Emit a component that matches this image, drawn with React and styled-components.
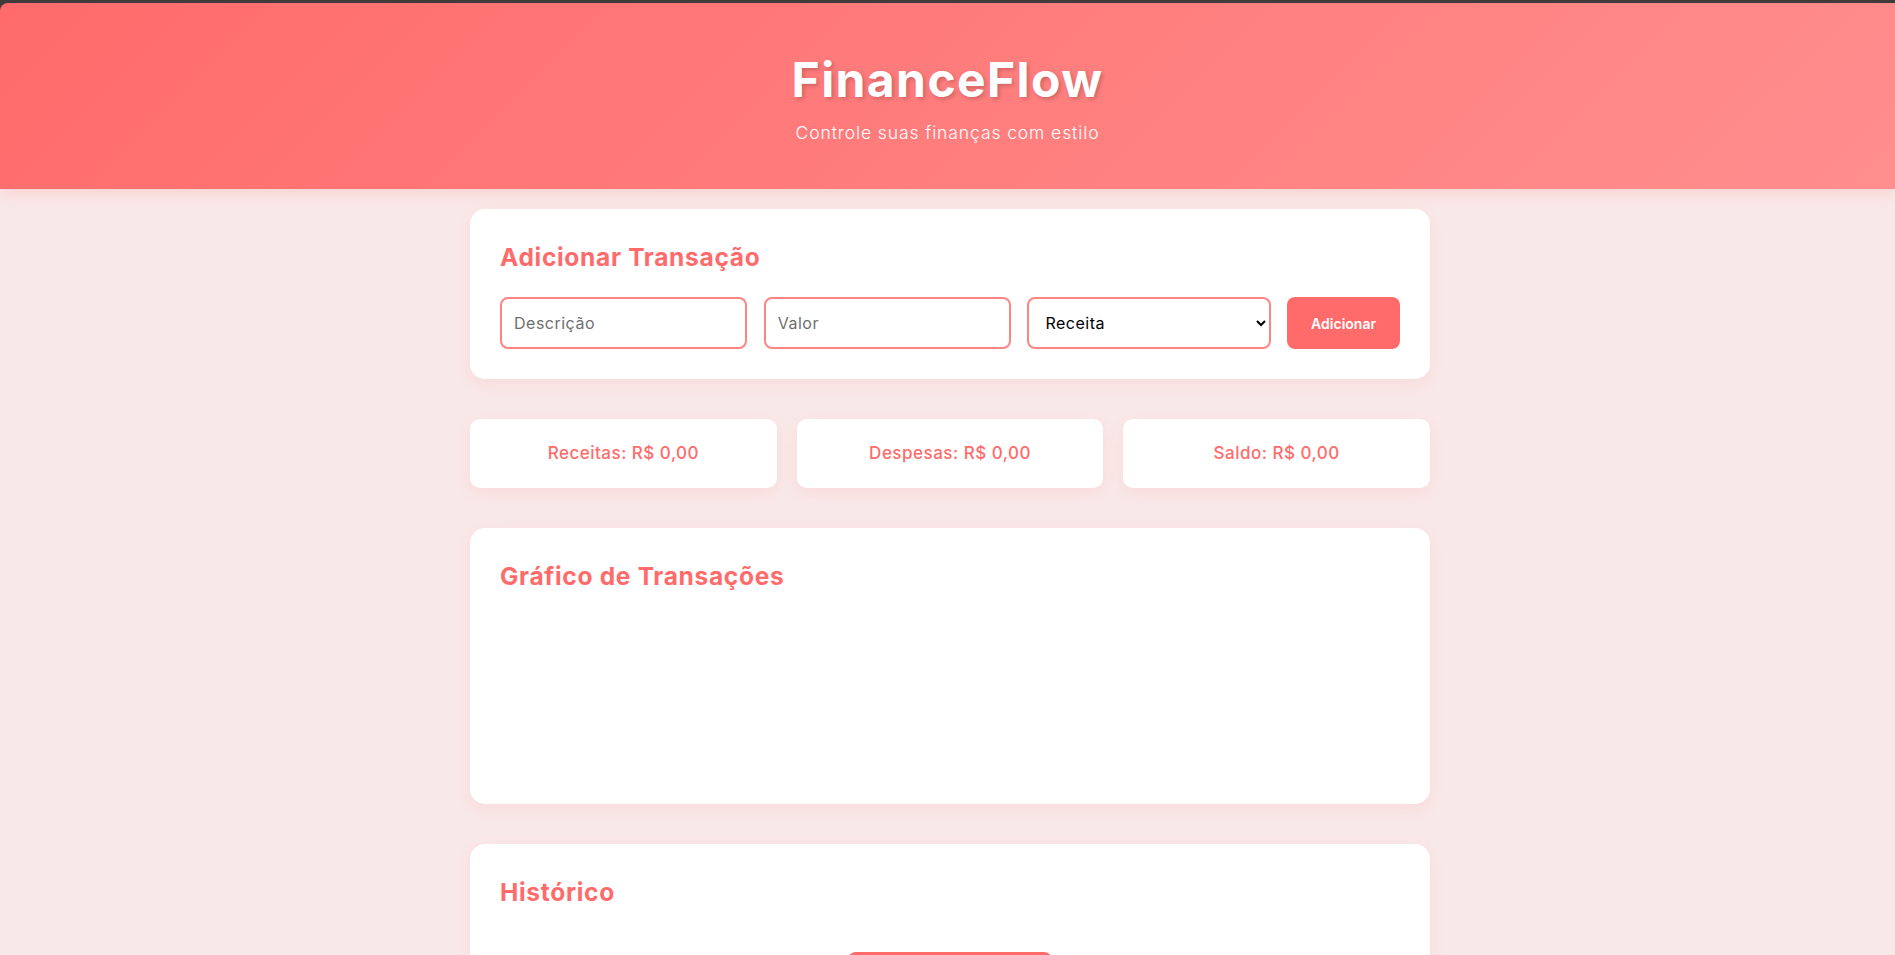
import React, { useState } from 'react';
import styled, { createGlobalStyle } from 'styled-components';

const GlobalStyle = createGlobalStyle`
  * {
    box-sizing: border-box;
  }

  body {
    margin: 0;
    background: #f9e8e8;
    font-family: Inter, "Open Sans", "DejaVu Sans", sans-serif;
    color: #333;
  }
`;

const Frame = styled.div`
  background: #3a3a3a;
  padding-top: 3px;
`;

const Header = styled.header`
  background: linear-gradient(135deg, #ff6b6b 0%, #ff8e8e 100%);
  border-top-left-radius: 8px;
  padding: 48px 20px 42px;
  text-align: center;
  color: #fff;
  box-shadow: 0 4px 16px rgba(255, 107, 107, 0.18);
  position: relative;
`;

const Title = styled.h1`
  margin: 0 0 10px;
  font-size: 48px;
  line-height: 57.6px;
  font-weight: 700;
  letter-spacing: 1.4px;
  text-shadow: 2px 2px 4px rgba(0, 0, 0, 0.2);
`;

const Subtitle = styled.p`
  margin: 0;
  font-size: 17.5px;
  line-height: 28.8px;
  font-weight: 300;
  letter-spacing: 0.9px;
`;

const Main = styled.main`
  max-width: 965px;
  margin: 0 auto;
  padding: 20px 0 40px 5px;
  display: flex;
  flex-direction: column;
  gap: 40px;
`;

const Card = styled.section`
  background: #fff;
  border-radius: 15px;
  padding: 30px;
  box-shadow: 0 5px 15px rgba(255, 107, 107, 0.1);
`;

const CardTitle = styled.h2`
  margin: 0 0 22px;
  font-size: 24.5px;
  line-height: 36px;
  font-weight: 700;
  letter-spacing: 0.7px;
  color: #ff6b6b;
`;

const FormRow = styled.div`
  display: flex;
  gap: 16.5px;
`;

const Field = styled.input`
  flex: 1;
  min-width: 0;
  height: 52px;
  padding: 12px;
  border: 2px solid #ff8585;
  border-radius: 8px;
  font-family: inherit;
  font-size: 16px;
  letter-spacing: 0.5px;
  color: #222;
  outline: none;

  &::placeholder {
    color: #6f6f6f;
  }
`;

const Select = styled.select`
  flex: 1;
  min-width: 0;
  height: 52px;
  padding: 0 8px 0 12px;
  border: 2px solid #ff8585;
  border-radius: 8px;
  background: #fff;
  font-family: inherit;
  font-size: 16px;
  letter-spacing: 0.5px;
  color: #000;
  outline: none;
`;

const Button = styled.button`
  flex: none;
  height: 52px;
  padding: 0 ${(p) => (p.$wide ? 46 : 24)}px;
  border: none;
  border-radius: 8px;
  background: #ff6b6b;
  color: #fff;
  font-family: inherit;
  font-size: 14px;
  font-weight: 600;
  cursor: pointer;
`;

const Stats = styled.div`
  display: grid;
  grid-template-columns: repeat(3, 1fr);
  gap: 20px;
`;

const StatCard = styled.div`
  background: #fff;
  border-radius: 10px;
  padding: 20px;
  text-align: center;
  font-size: 17px;
  line-height: 28.8px;
  font-weight: 500;
  letter-spacing: 0.5px;
  color: #ff6b6b;
  box-shadow: 0 5px 15px rgba(255, 107, 107, 0.1);
`;

const ChartArea = styled.div`
  height: 158px;
`;

const HistoryList = styled.ul`
  list-style: none;
  margin: 0;
  padding: 0;
  min-height: 20px;
`;

const Centered = styled.div`
  display: flex;
  justify-content: center;
`;

const fmt = (v) => `R$ ${v.toFixed(2).replace('.', ',')}`;

export default function App() {
  const [type, setType] = useState('receita');
  const income = 0;
  const expense = 0;

  return (
    <>
      <GlobalStyle />
      <Frame>
        <Header>
          <Title>FinanceFlow</Title>
          <Subtitle>Controle suas finanças com estilo</Subtitle>
        </Header>
      </Frame>
      <Main>
        <Card>
          <CardTitle>Adicionar Transação</CardTitle>
          <FormRow>
            <Field type="text" placeholder="Descrição" />
            <Field type="number" placeholder="Valor" />
            <Select value={type} onChange={(e) => setType(e.target.value)}>
              <option value="receita">Receita</option>
              <option value="despesa">Despesa</option>
            </Select>
            <Button type="button">Adicionar</Button>
          </FormRow>
        </Card>

        <Stats>
          <StatCard>{`Receitas: ${fmt(income)}`}</StatCard>
          <StatCard>{`Despesas: ${fmt(expense)}`}</StatCard>
          <StatCard>{`Saldo: ${fmt(income - expense)}`}</StatCard>
        </Stats>

        <Card>
          <CardTitle>Gráfico de Transações</CardTitle>
          <ChartArea />
        </Card>

        <Card>
          <CardTitle>Histórico</CardTitle>
          <HistoryList />
          <Centered>
            <Button type="button" $wide>Limpar Histórico</Button>
          </Centered>
        </Card>
      </Main>
    </>
  );
}
